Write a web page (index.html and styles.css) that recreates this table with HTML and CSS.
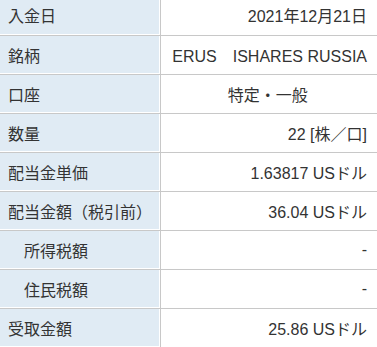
FILE: index.html
```html
<!DOCTYPE html>
<html lang="ja">
<head>
<meta charset="utf-8">
<title>配当金明細</title>
<link rel="stylesheet" href="styles.css">
</head>
<body>
<table class="detail">
  <tbody>
    <tr><th class="label">入金日</th><td class="value">2021年12月21日</td></tr>
    <tr><th class="label">銘柄</th><td class="value">ERUS　ISHARES RUSSIA</td></tr>
    <tr><th class="label">口座</th><td class="value value-center">特定・一般</td></tr>
    <tr><th class="label">数量</th><td class="value">22 [株／口]</td></tr>
    <tr><th class="label">配当金単価</th><td class="value">1.63817 USドル</td></tr>
    <tr><th class="label">配当金額（税引前）</th><td class="value">36.04 USドル</td></tr>
    <tr><th class="label label-sub">所得税額</th><td class="value">-</td></tr>
    <tr><th class="label label-sub">住民税額</th><td class="value">-</td></tr>
    <tr><th class="label">受取金額</th><td class="value">25.86 USドル</td></tr>
  </tbody>
</table>
</body>
</html>
```

FILE: styles.css
```css
html, body {
  margin: 0;
  padding: 0;
  background: #ffffff;
}

body {
  font-family: "Liberation Sans", "Noto Sans CJK JP", sans-serif;
  font-size: 16px;
  color: #333333;
  overflow: hidden;
}

.detail {
  width: 100%;
  margin-top: -4px;
  border-collapse: collapse;
  table-layout: fixed;
}

.detail tr {
  height: 39px;
}

.label {
  width: 160px;
  box-sizing: border-box;
  padding: 0 0 0 8px;
  text-align: left;
  font-weight: normal;
  background: #e0ebf4;
  box-shadow: inset -1px -1px 0 #ffffff;
  border-bottom: 1px solid #c8c8c8;
  border-right: 1px solid #c8c8c8;
  white-space: nowrap;
}

.label-sub {
  padding-left: 24px;
}

.value {
  padding: 0 10px 0 8px;
  text-align: right;
  border-bottom: 1px solid #c8c8c8;
  white-space: nowrap;
}

.value-center {
  text-align: center;
}
```
